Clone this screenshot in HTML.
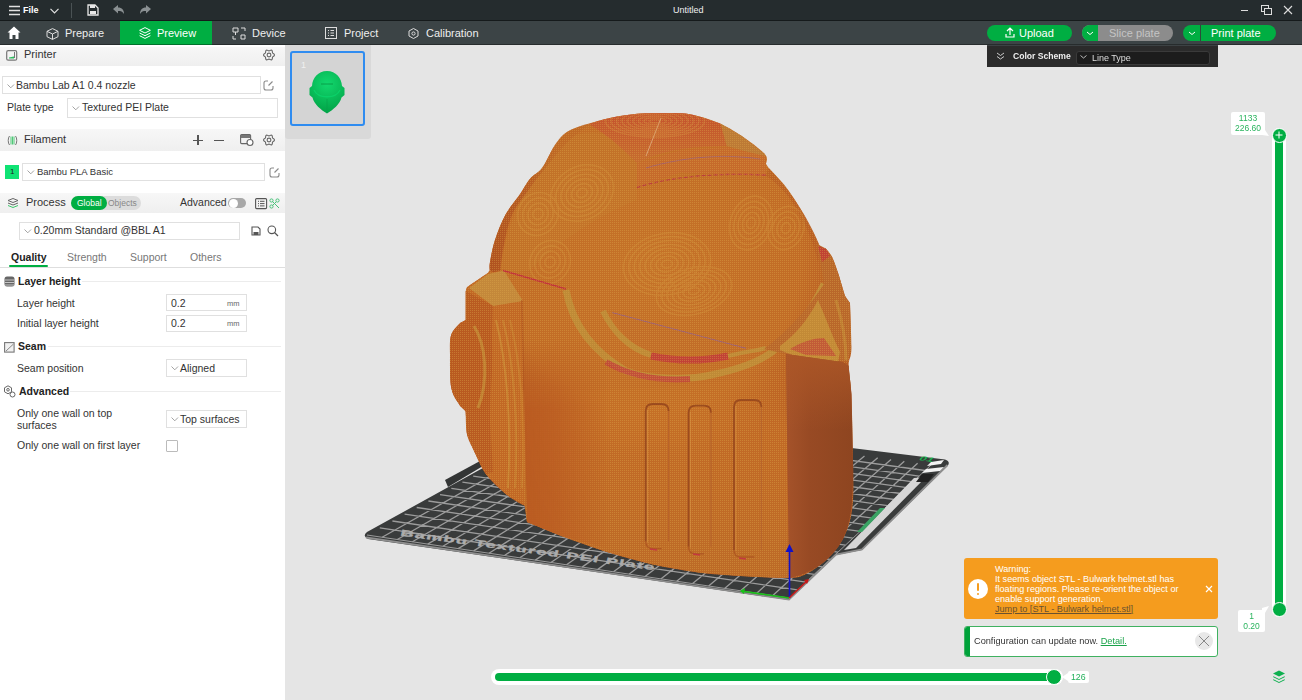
<!DOCTYPE html>
<html><head><meta charset="utf-8">
<style>
*{box-sizing:border-box;margin:0;padding:0}
html,body{width:1302px;height:700px;overflow:hidden;background:#e5e5e5;font-family:"Liberation Sans",sans-serif}
.a{position:absolute}
.t{position:absolute;white-space:nowrap;line-height:1}
#title{left:0;top:0;width:1302px;height:21px;background:#252c2e;border-bottom:1px solid #151a1b}
#tabs{left:0;top:21px;width:1302px;height:24px;background:#3c4446}
#left{left:0;top:45px;width:285px;height:655px;background:#fff}
.hdr{position:absolute;left:0;width:285px;background:linear-gradient(#f7f7f7,#efefef)}
.box{position:absolute;border:1px solid #e0e0e0;background:#fff}
.lbl{color:#333;font-size:10.5px}
.chev{position:absolute;width:6px;height:6px;border-right:1px solid #999;border-bottom:1px solid #999;transform:rotate(45deg)}
.sep{position:absolute;height:1px;background:#ececec}
svg{position:absolute;overflow:visible}
</style></head>
<body>
<!-- title bar -->
<div id="title" class="a">
  <svg style="left:9px;top:5px" width="12" height="11"><path d="M0 1.5H11M0 5.5H11M0 9.5H11" stroke="#e0e0e0" stroke-width="1.4"/></svg>
  <div class="t" style="left:23px;top:6px;font-size:9px;color:#fff;font-weight:bold">File</div>
  <svg style="left:50px;top:8px" width="9" height="6"><path d="M0.5 0.8L4.5 4.8L8.5 0.8" stroke="#e0e0e0" stroke-width="1.2" fill="none"/></svg>
  <div class="a" style="left:71px;top:3px;width:1px;height:15px;background:#4a5254"></div>
  <svg style="left:87px;top:4px" width="12" height="12"><path d="M1 1H8L11 4V11H1Z" stroke="#e8e8e8" stroke-width="1.3" fill="none"/><rect x="3" y="1" width="5" height="3" fill="#e8e8e8"/><rect x="3" y="7" width="6" height="3" fill="#e8e8e8"/></svg>
  <svg style="left:113px;top:5px" width="12" height="10"><path d="M0 4L5 0V2.5C9 2.5 11 5 11 9C9.5 6.5 8 6 5 6V8.5Z" fill="#8a9092"/></svg>
  <svg style="left:140px;top:5px" width="12" height="10"><path d="M11 4L6 0V2.5C2 2.5 0 5 0 9C1.5 6.5 3 6 6 6V8.5Z" fill="#8a9092"/></svg>
  <div class="t" style="left:673px;top:6px;font-size:9px;color:#f0f0f0">Untitled</div>
  <div class="a" style="left:1241px;top:10px;width:7px;height:1px;background:#ddd"></div>
  <svg style="left:1261px;top:5px" width="12" height="11"><rect x="0.5" y="0.5" width="7" height="6" stroke="#ddd" fill="none"/><rect x="3.5" y="3.5" width="7" height="6" stroke="#ddd" fill="#252c2e"/></svg>
  <svg style="left:1283px;top:5px" width="10" height="10"><path d="M1 1L9 9M9 1L1 9" stroke="#ddd" stroke-width="1.1"/></svg>
</div>
<!-- tabs bar -->
<div id="tabs" class="a">
  <svg style="left:7px;top:5px" width="14" height="14"><path d="M7 0.5L0.5 6.5H2.5V13H5.5V9H8.5V13H11.5V6.5H13.5Z" fill="#fff"/></svg>
  <svg style="left:46px;top:7px" width="13" height="12"><path d="M6.5 0.6L12 3.3V8.7L6.5 11.4L1 8.7V3.3Z M1 3.3L6.5 6L12 3.3 M6.5 6V11.4" stroke="#ddd" stroke-width="1" fill="none"/></svg>
  <div class="t" style="left:65px;top:7px;font-size:11px;color:#eee">Prepare</div>
  <div class="a" style="left:120px;top:0;width:92px;height:24px;background:#00ae42"></div>
  <svg style="left:139px;top:6px" width="12" height="13"><path d="M6 0.6L11.4 3.3L6 6L0.6 3.3Z M0.6 6L6 8.7L11.4 6 M0.6 8.7L6 11.4L11.4 8.7" stroke="#fff" stroke-width="1" fill="none"/></svg>
  <div class="t" style="left:157px;top:7px;font-size:11px;color:#fff">Preview</div>
  <svg style="left:232px;top:6px" width="14" height="13"><path d="M1 1H6V5H1Z M3.5 5V8 M1 9V12H4 M13 1V4 M9 1H13 M9 8H13V12H9Z" stroke="#ddd" stroke-width="1" fill="none"/></svg>
  <div class="t" style="left:252px;top:7px;font-size:11px;color:#eee">Device</div>
  <svg style="left:325px;top:6px" width="13" height="13"><rect x="0.5" y="0.5" width="11" height="11" stroke="#ddd" fill="none"/><path d="M3 3.5H4M5.5 3.5H9M3 6H4M5.5 6H9M3 8.5H4M5.5 8.5H9" stroke="#ddd"/></svg>
  <div class="t" style="left:344px;top:7px;font-size:11px;color:#eee">Project</div>
  <svg style="left:408px;top:7px" width="11" height="11"><path d="M5.5 0.5L10 3V8L5.5 10.5L1 8V3Z" stroke="#ddd" stroke-width="1" fill="none"/><circle cx="5.5" cy="5.5" r="1.6" stroke="#ddd" fill="none"/></svg>
  <div class="t" style="left:426px;top:7px;font-size:11px;color:#eee">Calibration</div>
  <!-- upload -->
  <div class="a" style="left:987px;top:4px;width:85px;height:16px;border-radius:8px;background:#00ae42"></div>
  <svg style="left:1005px;top:6px" width="10" height="11"><path d="M5 8V1M2 4L5 1L8 4M1 7V10H9V7" stroke="#fff" stroke-width="1.2" fill="none"/></svg>
  <div class="t" style="left:1019px;top:7px;font-size:11px;color:#fff">Upload</div>
  <div class="a" style="left:1082px;top:4px;width:91px;height:16px;border-radius:8px;background:#8c8c8c;overflow:hidden"><div class="a" style="left:0;top:0;width:16px;height:16px;background:#00ae42"></div></div>
  <svg style="left:1086px;top:10px" width="8" height="5"><path d="M1 1L4 3.5L7 1" stroke="#fff" stroke-width="1" fill="none"/></svg>
  <div class="t" style="left:1109px;top:7px;font-size:11px;color:#c4c4c4">Slice plate</div>
  <div class="a" style="left:1183px;top:4px;width:93px;height:16px;border-radius:8px;background:#00ae42;overflow:hidden"><div class="a" style="left:17px;top:0;width:1px;height:16px;background:#2d4b3a"></div></div>
  <svg style="left:1188px;top:10px" width="8" height="5"><path d="M1 1L4 3.5L7 1" stroke="#fff" stroke-width="1" fill="none"/></svg>
  <div class="t" style="left:1211px;top:7px;font-size:11px;color:#fff">Print plate</div>
</div>

<div class="a" style="left:0;top:44px;width:1302px;height:1px;background:rgba(0,0,0,0.35)"></div>
<!-- left panel -->
<div id="left" class="a">
  <div class="hdr" style="top:2px;height:19px"></div>
  <svg style="left:6px;top:5px" width="12" height="11"><rect x="0.7" y="0.7" width="10" height="9.5" rx="1.5" stroke="#777" stroke-width="1.2" fill="none"/><path d="M3 8.5H8V6.5L3 7.5Z" fill="#2ebd5f"/><path d="M8.5 2V8" stroke="#777"/></svg>
  <div class="t lbl" style="left:24px;top:4px;font-size:11px">Printer</div>
  <svg style="left:263px;top:4px" width="12" height="12"><path d="M7.33 1.38Q8.10 0.92 8.73 1.28Q9.35 1.64 9.34 2.54Q9.33 3.44 9.61 3.92Q9.88 4.39 10.67 4.84Q11.45 5.28 11.45 6.00Q11.45 6.72 10.67 7.16Q9.88 7.61 9.61 8.08Q9.33 8.56 9.34 9.46Q9.35 10.36 8.73 10.72Q8.10 11.08 7.33 10.62Q6.55 10.16 6.00 10.16Q5.45 10.16 4.67 10.62Q3.90 11.08 3.27 10.72Q2.65 10.36 2.66 9.46Q2.67 8.56 2.39 8.08Q2.12 7.61 1.33 7.16Q0.55 6.72 0.55 6.00Q0.55 5.28 1.33 4.84Q2.12 4.39 2.39 3.92Q2.67 3.44 2.66 2.54Q2.65 1.64 3.27 1.28Q3.90 0.92 4.67 1.38Q5.45 1.84 6.00 1.84Q6.55 1.84 7.33 1.38Z" stroke="#666" stroke-width="1.1" fill="none"/><circle cx="6" cy="6" r="1.9" stroke="#666" stroke-width="1.1" fill="none"/></svg>

  <div class="box" style="left:2px;top:31px;width:259px;height:18px"></div>
  <svg style="left:7.0px;top:39.0px" width="8" height="5"><path d="M0.5 0.5L3.8 3.8L7 0.5" stroke="#9a9a9a" stroke-width="0.9" fill="none"/></svg>
  <div class="t lbl" style="left:16px;top:34.5px">Bambu Lab A1 0.4 nozzle</div>
  <svg style="left:263px;top:35px" width="11" height="11"><path d="M5 1H3Q1 1 1 3V8Q1 10 3 10H8Q10 10 10 8V6" stroke="#8a8a8a" stroke-width="1.1" fill="none"/><path d="M5.5 5.5L9.5 1.5" stroke="#8a8a8a" stroke-width="1.1"/></svg>

  <div class="t lbl" style="left:7px;top:57px">Plate type</div>
  <div class="box" style="left:67px;top:53px;width:211px;height:20px"></div>
  <svg style="left:72px;top:61px" width="8" height="5"><path d="M0.5 0.5L3.8 3.8L7 0.5" stroke="#9a9a9a" stroke-width="0.9" fill="none"/></svg>
  <div class="t lbl" style="left:82px;top:57px">Textured PEI Plate</div>

  <div class="hdr" style="top:84px;height:22px"></div>
  <svg style="left:7px;top:90px" width="11" height="11"><path d="M2.5 1C0.8 3 0.8 8 2.5 10M8.5 1C10.2 3 10.2 8 8.5 10" stroke="#777" stroke-width="1" fill="none"/><path d="M4 1.5V9.5M5.5 1.5V9.5M7 1.5V9.5" stroke="#3cc46a" stroke-width="0.9"/></svg>
  <div class="t lbl" style="left:24px;top:89px;font-size:11px">Filament</div>
  <div class="a" style="left:193px;top:94.5px;width:10px;height:1.2px;background:#555"></div>
  <div class="a" style="left:197.4px;top:90px;width:1.2px;height:10px;background:#555"></div>
  <div class="a" style="left:214px;top:94.5px;width:10px;height:1.2px;background:#555"></div>
  <svg style="left:240px;top:89px" width="14" height="12"><rect x="0.6" y="0.6" width="10" height="9" rx="1" stroke="#666" stroke-width="1.1" fill="none"/><rect x="1" y="1" width="9" height="3" fill="#777"/><circle cx="10" cy="8.5" r="3" fill="#fff" stroke="#666" stroke-width="1.1"/></svg>
  <svg style="left:263px;top:89px" width="12" height="12"><path d="M7.33 1.38Q8.10 0.92 8.73 1.28Q9.35 1.64 9.34 2.54Q9.33 3.44 9.61 3.92Q9.88 4.39 10.67 4.84Q11.45 5.28 11.45 6.00Q11.45 6.72 10.67 7.16Q9.88 7.61 9.61 8.08Q9.33 8.56 9.34 9.46Q9.35 10.36 8.73 10.72Q8.10 11.08 7.33 10.62Q6.55 10.16 6.00 10.16Q5.45 10.16 4.67 10.62Q3.90 11.08 3.27 10.72Q2.65 10.36 2.66 9.46Q2.67 8.56 2.39 8.08Q2.12 7.61 1.33 7.16Q0.55 6.72 0.55 6.00Q0.55 5.28 1.33 4.84Q2.12 4.39 2.39 3.92Q2.67 3.44 2.66 2.54Q2.65 1.64 3.27 1.28Q3.90 0.92 4.67 1.38Q5.45 1.84 6.00 1.84Q6.55 1.84 7.33 1.38Z" stroke="#666" stroke-width="1.1" fill="none"/><circle cx="6" cy="6" r="1.9" stroke="#666" stroke-width="1.1" fill="none"/></svg>

  <div class="a" style="left:5px;top:120px;width:14px;height:14px;background:#0fe374"></div>
  <div class="t" style="left:10px;top:122.7px;font-size:8px;color:#222">1</div>
  <div class="box" style="left:22px;top:118px;width:243px;height:18px"></div>
  <svg style="left:27.0px;top:125.0px" width="8" height="5"><path d="M0.5 0.5L3.8 3.8L7 0.5" stroke="#9a9a9a" stroke-width="0.9" fill="none"/></svg>
  <div class="t lbl" style="left:37px;top:121.5px;font-size:9.5px">Bambu PLA Basic</div>
  <svg style="left:269px;top:122px" width="11" height="11"><path d="M5 1H3Q1 1 1 3V8Q1 10 3 10H8Q10 10 10 8V6" stroke="#8a8a8a" stroke-width="1.1" fill="none"/><path d="M5.5 5.5L9.5 1.5" stroke="#8a8a8a" stroke-width="1.1"/></svg>

  <div class="hdr" style="top:148px;height:20px"></div>
  <svg style="left:7px;top:152px" width="12" height="12"><path d="M1 3.5L6 1.5L11 3.5L6 5.5Z" stroke="#666" fill="none"/><path d="M1 6L6 8L11 6" stroke="#666" fill="none"/><path d="M1 8.5L6 10.5L11 8.5" stroke="#3cc46a" fill="none"/></svg>
  <div class="t lbl" style="left:26px;top:152px;font-size:11px">Process</div>
  <div class="a" style="left:71px;top:151px;width:70px;height:14px;border-radius:7px;background:#dcdcdc"></div>
  <div class="a" style="left:71px;top:151px;width:36px;height:14px;border-radius:7px;background:#00ae42"></div>
  <div class="t" style="left:77px;top:154px;font-size:8.5px;color:#fff">Global</div>
  <div class="t" style="left:108px;top:154px;font-size:8.5px;color:#888">Objects</div>
  <div class="t lbl" style="left:180px;top:152px;font-size:10.5px">Advanced</div>
  <div class="a" style="left:228px;top:153px;width:18px;height:10px;border-radius:5px;background:#a8a8a8"></div>
  <div class="a" style="left:228.5px;top:153.5px;width:9px;height:9px;border-radius:50%;background:#fff"></div>
  <svg style="left:255px;top:153px" width="13" height="12"><rect x="0.6" y="0.6" width="11" height="10" rx="1" stroke="#555" stroke-width="1.1" fill="none"/><path d="M3 3.3H4M5 3.3H9.5M3 5.6H4M5 5.6H9.5M3 7.9H4M5 7.9H9.5" stroke="#555"/></svg>
  <svg style="left:269px;top:153px" width="11" height="11"><circle cx="2.5" cy="2.5" r="1.6" stroke="#49c27a" fill="none"/><circle cx="2.5" cy="8.5" r="1.6" stroke="#49c27a" fill="none"/><circle cx="8.5" cy="2.5" r="1.6" stroke="#49c27a" fill="none"/><path d="M3.5 3.5L10 10M3.5 7.5L7 4" stroke="#49c27a"/></svg>

  <div class="box" style="left:19px;top:177px;width:221px;height:18px"></div>
  <svg style="left:24.0px;top:184.0px" width="8" height="5"><path d="M0.5 0.5L3.8 3.8L7 0.5" stroke="#9a9a9a" stroke-width="0.9" fill="none"/></svg>
  <div class="t lbl" style="left:34px;top:180px">0.20mm Standard @BBL A1</div>
  <svg style="left:251px;top:181px" width="10" height="10"><path d="M1 1H7L9 3V9H1Z" stroke="#555" stroke-width="1.1" fill="none"/><rect x="2.5" y="6" width="5" height="3" fill="#555"/></svg>
  <svg style="left:267px;top:180px" width="12" height="12"><circle cx="4.8" cy="4.8" r="3.8" stroke="#555" stroke-width="1.1" fill="none"/><path d="M7.5 7.5L11 11" stroke="#555" stroke-width="1.2"/></svg>

  <div class="t" style="left:11px;top:207px;font-size:10.5px;color:#222;font-weight:bold">Quality</div>
  <div class="a" style="left:9px;top:220px;width:39px;height:2px;background:#00ae42;border-radius:1px"></div>
  <div class="t" style="left:67px;top:207px;font-size:10.5px;color:#777">Strength</div>
  <div class="t" style="left:130px;top:207px;font-size:10.5px;color:#777">Support</div>
  <div class="t" style="left:190px;top:207px;font-size:10.5px;color:#777">Others</div>
  <div class="a" style="left:0;top:222px;width:285px;height:1px;background:#dedede"></div>

  <svg style="left:4px;top:231px" width="11" height="11"><rect x="0.5" y="0.5" width="10" height="10" rx="2.5" fill="#666"/><path d="M1 4H10M1 6.5H10M1 9H10" stroke="#ddd" stroke-width="0.8"/></svg>
  <div class="t" style="left:18px;top:231px;font-size:10.5px;color:#222;font-weight:bold">Layer height</div>
  <div class="sep" style="left:82px;top:236px;width:199px"></div>
  <div class="t lbl" style="left:17px;top:253px">Layer height</div>
  <div class="box" style="left:166px;top:249px;width:81px;height:17px"></div>
  <div class="t lbl" style="left:171px;top:253px">0.2</div>
  <div class="t" style="left:227px;top:255px;font-size:7.5px;color:#666">mm</div>
  <div class="t lbl" style="left:17px;top:273px">Initial layer height</div>
  <div class="box" style="left:166px;top:270px;width:81px;height:17px"></div>
  <div class="t lbl" style="left:171px;top:273px">0.2</div>
  <div class="t" style="left:227px;top:275px;font-size:7.5px;color:#666">mm</div>

  <svg style="left:4px;top:297px" width="11" height="11"><rect x="0.6" y="0.6" width="9.5" height="9.5" stroke="#777" stroke-width="1.1" fill="#f0f0f0"/><path d="M2 9L9.5 2" stroke="#888"/></svg>
  <div class="t" style="left:18px;top:296px;font-size:10.5px;color:#222;font-weight:bold">Seam</div>
  <div class="sep" style="left:48px;top:301px;width:233px"></div>
  <div class="t lbl" style="left:17px;top:318px">Seam position</div>
  <div class="box" style="left:166px;top:314px;width:81px;height:18px"></div>
  <svg style="left:171.0px;top:321.0px" width="8" height="5"><path d="M0.5 0.5L3.8 3.8L7 0.5" stroke="#9a9a9a" stroke-width="0.9" fill="none"/></svg>
  <div class="t lbl" style="left:180px;top:318px">Aligned</div>

  <svg style="left:3px;top:340px" width="13" height="13"><path d="M5 0.8L8.5 2.8V6.8L5 8.8L1.5 6.8V2.8Z" stroke="#666" stroke-width="1" fill="none"/><circle cx="5" cy="4.8" r="1.3" stroke="#666" fill="none"/><circle cx="9.5" cy="9.5" r="2.5" stroke="#666" fill="#fff"/></svg>
  <div class="t" style="left:19px;top:341px;font-size:10.5px;color:#222;font-weight:bold">Advanced</div>
  <div class="sep" style="left:70px;top:346px;width:211px"></div>
  <div class="t lbl" style="left:17px;top:363px">Only one wall on top</div>
  <div class="t lbl" style="left:17px;top:375px">surfaces</div>
  <div class="box" style="left:166px;top:365px;width:81px;height:18px"></div>
  <svg style="left:171.0px;top:372.0px" width="8" height="5"><path d="M0.5 0.5L3.8 3.8L7 0.5" stroke="#9a9a9a" stroke-width="0.9" fill="none"/></svg>
  <div class="t lbl" style="left:180px;top:369px">Top surfaces</div>
  <div class="t lbl" style="left:17px;top:395px">Only one wall on first layer</div>
  <div class="a" style="left:166px;top:395px;width:12px;height:12px;border:1px solid #bbb;border-radius:1px;background:#fff"></div>
</div>

<!-- viewport -->
<svg class="a" style="left:0;top:0" width="1302" height="700" viewBox="0 0 1302 700">
<path d="M445 480 L480 461 L483 466 L448 487 Z" fill="#333535"/>
<path d="M367 532 L580 414.5 L945 459.5 Q951 461.5 947.5 466 L862 550 L836 555 L789 600 L368 539 Q362 536 367 532 Z" fill="#393b3b"/>
<path d="M382.1 537.3L592.6 418.7M397.3 539.5L605.3 420.5M412.4 541.8L618.0 422.2M427.7 544.1L630.7 423.9M442.9 546.3L643.5 425.7M458.2 548.6L656.3 427.4M473.6 550.9L669.1 429.2M489.0 553.2L681.9 430.9M504.4 555.5L694.8 432.7M519.8 557.8L707.6 434.5M535.3 560.1L720.6 436.2M550.9 562.5L733.5 438.0M566.5 564.8L746.5 439.8M582.1 567.1L759.5 441.5M597.8 569.4L772.5 443.3M613.5 571.8L785.5 445.1M629.2 574.1L798.6 446.9M645.0 576.5L811.7 448.7M660.8 578.9L824.9 450.5M676.7 581.2L838.0 452.3M692.6 583.6L851.2 454.1M708.6 586.0L864.5 455.9M724.6 588.4L877.7 457.7M740.6 590.8L891.0 459.5M756.7 593.2L904.3 461.3M772.8 595.6L917.6 463.2M379.8 527.9L797.6 589.9M392.4 521.0L806.0 582.1M404.6 514.1L814.2 574.4M416.7 507.5L822.3 566.8M428.4 501.0L830.2 559.5M440.0 494.6L837.9 552.2M451.3 488.3L845.4 545.2M462.4 482.2L852.8 538.2M473.2 476.1L860.1 531.4M483.9 470.2L867.2 524.8M494.3 464.5L874.1 518.3M504.6 458.8L880.9 511.9M514.6 453.2L887.6 505.6M524.5 447.7L894.2 499.5M534.2 442.4L900.6 493.5M543.7 437.1L906.9 487.6M553.0 432.0L913.1 481.8M562.2 426.9L919.2 476.1M571.2 421.9L925.1 470.5" stroke="#9c9c9c" stroke-width="1.3" fill="none"/>
<path d="M367.0 535.0 L789.0 598.0 L931.0 465.0" stroke="#9a9a9a" stroke-width="1" fill="none"/>
<path d="M366 537.5 L789 599.5 L836 554.5 L862 549.5 L947.5 465" stroke="#8e8e8e" stroke-width="1.8" fill="none"/>
<path d="M844 550 L856 548 L926 477 L914 478 Z" fill="#d6d6d6"/>
<path d="M857 532 L862 532 L885 508 L880 508 Z" fill="#3aa364"/>
<path d="M916 482 L928 482 L934 474 L922 474 Z" fill="#222"/>
<path d="M922 473 L940 471 L944 467 L926 469 Z" fill="#f2f2f2"/>
<path d="M927 466 L941 464 L944 460 L931 462 Z" fill="#f2f2f2"/>
<text x="0" y="0" transform="matrix(0.69,0.094,-0.08,0.33,400,535.5)" font-family="Liberation Sans" font-weight="bold" font-size="26" fill="#acacac" stroke="#acacac" stroke-width="0.9" letter-spacing="2">Bambu Textured PEI Plate</text>
<text x="0" y="0" transform="matrix(0.9,0.12,-0.4,0.4,918,460)" font-family="Liberation Sans" font-weight="bold" font-size="14" fill="#19b04f">01</text>
<defs>
<radialGradient id="dome" cx="650" cy="260" r="200" gradientUnits="userSpaceOnUse">
<stop offset="0" stop-color="#c57228"/><stop offset="0.75" stop-color="#c26c26"/><stop offset="1" stop-color="#b65a22"/></radialGradient>
<linearGradient id="sideg" x1="786" y1="0" x2="853" y2="0" gradientUnits="userSpaceOnUse">
<stop offset="0" stop-color="#a5532a"/><stop offset="0.35" stop-color="#984a24"/><stop offset="1" stop-color="#8e4520"/></linearGradient>
<linearGradient id="faceg" x1="0" y1="360" x2="0" y2="575" gradientUnits="userSpaceOnUse">
<stop offset="0" stop-color="#c97428" stop-opacity="0"/><stop offset="0.3" stop-color="#c97428" stop-opacity="0.6"/><stop offset="1" stop-color="#bc6a27"/></linearGradient>
<linearGradient id="capg" x1="0" y1="113" x2="0" y2="158" gradientUnits="userSpaceOnUse">
<stop offset="0" stop-color="#c5522d"/><stop offset="1" stop-color="#c66a2e"/></linearGradient>
<linearGradient id="sidetop" x1="0" y1="354" x2="0" y2="430" gradientUnits="userSpaceOnUse"><stop offset="0" stop-color="#ad5727" stop-opacity="0.9"/><stop offset="1" stop-color="#ad5727" stop-opacity="0"/></linearGradient>
<linearGradient id="rimg" x1="490" y1="0" x2="560" y2="0" gradientUnits="userSpaceOnUse"><stop offset="0" stop-color="#b05220"/><stop offset="0.5" stop-color="#b65a22"/><stop offset="1" stop-color="#bc6424" stop-opacity="0.5"/></linearGradient>
<linearGradient id="facel" x1="522" y1="0" x2="610" y2="0" gradientUnits="userSpaceOnUse"><stop offset="0" stop-color="#b95a21" stop-opacity="0.95"/><stop offset="0.35" stop-color="#bb5c22" stop-opacity="0.8"/><stop offset="1" stop-color="#bb5c22" stop-opacity="0"/></linearGradient>
<linearGradient id="vmaskg" x1="0" y1="340" x2="0" y2="410" gradientUnits="userSpaceOnUse"><stop offset="0" stop-color="#fff" stop-opacity="0"/><stop offset="1" stop-color="#fff" stop-opacity="1"/></linearGradient>
<mask id="vmask" maskUnits="userSpaceOnUse" x="0" y="0" width="1302" height="700"><rect x="0" y="0" width="1302" height="700" fill="url(#vmaskg)"/></mask>
<pattern id="dots" width="2" height="2" patternUnits="userSpaceOnUse"><rect x="0" y="0" width="1" height="1" fill="#dcaa4c"/></pattern>
<clipPath id="silclip"><path d="M665.0 113.0 C656.8 112.9 649.8 112.8 640.6 113.6 C631.4 114.4 619.1 116.1 609.9 117.9 C600.7 119.8 592.5 122.4 585.3 124.7 C578.1 127.0 572.0 128.5 566.9 132.0 C561.8 135.5 558.7 139.6 554.6 145.5 C550.5 151.4 546.4 162.2 542.3 167.7 C538.2 173.2 533.6 174.5 530.0 178.7 C526.4 182.9 524.8 187.0 520.8 192.9 C516.8 198.8 510.0 206.5 505.7 214.3 C501.4 222.2 497.6 232.1 495.0 240.0 C492.4 247.9 490.9 257.0 490.0 262.0 C489.1 267.0 489.8 268.7 489.7 270.0 C489.3 270.6 487.9 272.8 487.5 273.3 C484.1 275.6 470.4 284.9 467.0 287.2 C466.8 287.9 465.9 290.7 465.7 291.4 C465.7 296.2 465.7 315.2 465.7 320.0 C464.8 320.5 460.9 322.4 460.0 322.9 C458.6 324.8 453.1 329.1 451.4 334.3 C449.7 339.5 450.0 345.2 450.0 354.3 C450.0 363.4 449.7 380.0 451.4 388.6 C453.1 397.2 458.6 402.9 460.0 405.7 C460.9 406.6 464.8 410.4 465.7 411.4 C465.9 415.2 465.6 427.6 467.0 434.3 C468.4 441.0 471.1 444.7 474.3 451.4 C477.5 458.1 480.6 467.1 486.0 474.3 C491.4 481.5 500.1 489.5 506.6 494.8 C513.1 500.1 521.8 504.1 524.8 506.0 C525.2 508.7 526.6 519.3 527.0 522.0 C532.7 524.3 548.1 531.0 561.4 536.0 C574.7 541.0 591.8 547.2 607.0 552.0 C622.2 556.8 637.5 561.1 652.8 564.5 C668.0 567.9 684.0 570.6 698.5 572.5 C713.0 574.4 724.9 575.1 740.0 576.0 C755.1 576.9 778.0 578.3 789.0 578.0 C800.0 577.7 800.2 576.7 806.0 574.0 C811.8 571.3 818.3 567.0 824.0 562.0 C829.7 557.0 835.8 550.3 840.0 544.0 C844.2 537.7 846.8 531.3 849.0 524.0 C851.2 516.7 852.3 510.7 853.0 500.0 C853.7 489.3 853.3 477.6 853.0 460.0 C852.7 442.4 852.1 410.0 851.4 394.3 C850.7 378.6 848.6 373.3 848.6 365.7 C848.6 358.1 851.2 359.1 851.4 348.6 C851.6 338.1 850.2 310.5 850.0 302.9 C849.2 301.7 846.9 300.6 845.0 295.8 C843.1 291.1 840.7 280.8 838.6 274.4 C836.5 268.0 834.3 261.5 832.2 257.2 C830.1 252.9 826.9 250.0 825.8 248.6 C824.9 248.4 821.3 247.8 820.4 247.6 C819.1 244.9 816.3 238.1 812.9 231.5 C809.5 224.9 804.8 215.7 800.0 207.9 C795.2 200.2 789.6 191.7 784.4 185.0 C779.1 178.3 771.1 170.6 768.5 167.7 C768.1 167.1 766.4 164.6 766.0 164.0 C765.8 162.3 768.9 158.8 764.8 154.1 C760.7 149.4 749.4 141.0 741.4 135.7 C733.4 130.4 725.5 125.8 716.9 122.2 C708.3 118.6 698.6 115.7 690.0 114.2 C681.4 112.7 673.2 113.1 665.0 113.0 Z"/></clipPath>
</defs>
<path d="M665.0 113.0 C656.8 112.9 649.8 112.8 640.6 113.6 C631.4 114.4 619.1 116.1 609.9 117.9 C600.7 119.8 592.5 122.4 585.3 124.7 C578.1 127.0 572.0 128.5 566.9 132.0 C561.8 135.5 558.7 139.6 554.6 145.5 C550.5 151.4 546.4 162.2 542.3 167.7 C538.2 173.2 533.6 174.5 530.0 178.7 C526.4 182.9 524.8 187.0 520.8 192.9 C516.8 198.8 510.0 206.5 505.7 214.3 C501.4 222.2 497.6 232.1 495.0 240.0 C492.4 247.9 490.9 257.0 490.0 262.0 C489.1 267.0 489.8 268.7 489.7 270.0 C489.3 270.6 487.9 272.8 487.5 273.3 C484.1 275.6 470.4 284.9 467.0 287.2 C466.8 287.9 465.9 290.7 465.7 291.4 C465.7 296.2 465.7 315.2 465.7 320.0 C464.8 320.5 460.9 322.4 460.0 322.9 C458.6 324.8 453.1 329.1 451.4 334.3 C449.7 339.5 450.0 345.2 450.0 354.3 C450.0 363.4 449.7 380.0 451.4 388.6 C453.1 397.2 458.6 402.9 460.0 405.7 C460.9 406.6 464.8 410.4 465.7 411.4 C465.9 415.2 465.6 427.6 467.0 434.3 C468.4 441.0 471.1 444.7 474.3 451.4 C477.5 458.1 480.6 467.1 486.0 474.3 C491.4 481.5 500.1 489.5 506.6 494.8 C513.1 500.1 521.8 504.1 524.8 506.0 C525.2 508.7 526.6 519.3 527.0 522.0 C532.7 524.3 548.1 531.0 561.4 536.0 C574.7 541.0 591.8 547.2 607.0 552.0 C622.2 556.8 637.5 561.1 652.8 564.5 C668.0 567.9 684.0 570.6 698.5 572.5 C713.0 574.4 724.9 575.1 740.0 576.0 C755.1 576.9 778.0 578.3 789.0 578.0 C800.0 577.7 800.2 576.7 806.0 574.0 C811.8 571.3 818.3 567.0 824.0 562.0 C829.7 557.0 835.8 550.3 840.0 544.0 C844.2 537.7 846.8 531.3 849.0 524.0 C851.2 516.7 852.3 510.7 853.0 500.0 C853.7 489.3 853.3 477.6 853.0 460.0 C852.7 442.4 852.1 410.0 851.4 394.3 C850.7 378.6 848.6 373.3 848.6 365.7 C848.6 358.1 851.2 359.1 851.4 348.6 C851.6 338.1 850.2 310.5 850.0 302.9 C849.2 301.7 846.9 300.6 845.0 295.8 C843.1 291.1 840.7 280.8 838.6 274.4 C836.5 268.0 834.3 261.5 832.2 257.2 C830.1 252.9 826.9 250.0 825.8 248.6 C824.9 248.4 821.3 247.8 820.4 247.6 C819.1 244.9 816.3 238.1 812.9 231.5 C809.5 224.9 804.8 215.7 800.0 207.9 C795.2 200.2 789.6 191.7 784.4 185.0 C779.1 178.3 771.1 170.6 768.5 167.7 C768.1 167.1 766.4 164.6 766.0 164.0 C765.8 162.3 768.9 158.8 764.8 154.1 C760.7 149.4 749.4 141.0 741.4 135.7 C733.4 130.4 725.5 125.8 716.9 122.2 C708.3 118.6 698.6 115.7 690.0 114.2 C681.4 112.7 673.2 113.1 665.0 113.0 Z" fill="url(#dome)"/>
<path d="M575 135 C600 128 615 135 637 157 L637 200 C600 215 560 240 530 270 L500 276 C505 220 530 170 575 135 Z" fill="#c47f30" opacity="0.3"/>
<path d="M589.0 124.0 C588.5 122.7 572.6 128.4 566.9 132.0 C561.2 135.6 558.7 139.6 554.6 145.5 C550.5 151.4 546.4 162.2 542.3 167.7 C538.2 173.2 533.6 174.5 530.0 178.7 C526.4 182.9 524.8 187.0 520.8 192.9 C516.8 198.8 510.0 206.5 505.7 214.3 C501.4 222.2 497.6 232.1 495.0 240.0 C492.4 247.9 490.9 257.0 490.0 262.0 C489.1 267.0 489.8 268.7 489.7 270.0 C491.4 271.0 498.3 275.0 500.0 276.0 C500.5 271.7 501.0 260.2 503.0 250.0 C505.0 239.8 507.5 225.3 512.0 215.0 C516.5 204.7 523.3 197.2 530.0 188.0 C536.7 178.8 545.3 168.0 552.0 160.0 C558.7 152.0 563.8 146.0 570.0 140.0 C576.2 134.0 589.5 125.3 589.0 124.0 Z" fill="url(#rimg)"/>
<path d="M768.5 167.7 C790 190 810 220 820.4 247.6 L818 262 C812 236 800 212 788 196 C778 184 770 178 766 176 Z" fill="#b85c24" opacity="0.7"/>
<path d="M589.0 124.0 C592.5 123.0 601.3 119.6 609.9 117.9 C618.5 116.2 631.4 114.4 640.6 113.6 C649.8 112.8 656.8 112.9 665.0 113.0 C673.2 113.1 680.8 112.5 690.0 114.2 C699.2 116.0 715.4 122.0 720.5 123.5 C721.5 127.2 725.7 142.2 726.7 146.0 C720.6 146.3 701.1 146.7 690.0 148.0 C678.9 149.3 668.8 151.5 660.0 154.0 C651.2 156.5 640.8 161.5 637.0 163.0 C632.8 159.2 620.0 146.5 612.0 140.0 C604.0 133.5 592.8 126.7 589.0 124.0 Z" fill="url(#capg)"/>
<path d="M720.5 123.5 L741.4 135.7 L764.8 154.1 L765 157 L726.7 146 Z" fill="#bd7a35"/>
<path d="M637 163 L680 150 L726.7 147 L765 156 L766 176 L680 172.6 L637 187.6 Z" fill="#c66a2b"/>
<path d="M637 187.6 C660 180 700 172 766 175" stroke="#bb3e3c" stroke-width="1.3" fill="none" stroke-dasharray="4 2"/>
<path d="M646 168 C680 158 720 153 760 159" stroke="#8a5a96" stroke-width="0.8" fill="none" opacity="0.7"/>
<path d="M661 118 L646 156" stroke="#ecd2b0" stroke-width="0.8" opacity="0.7"/>
<g clip-path="url(#silclip)" fill="none" stroke="#d9a247" stroke-width="1.6" opacity="0.25"><ellipse cx="582" cy="193" rx="5.5" ry="4.4" transform="rotate(-30 582 193)"/><ellipse cx="582" cy="193" rx="11.0" ry="8.8" transform="rotate(-30 582 193)"/><ellipse cx="582" cy="193" rx="16.5" ry="13.2" transform="rotate(-30 582 193)"/><ellipse cx="582" cy="193" rx="22.0" ry="17.6" transform="rotate(-30 582 193)"/><ellipse cx="582" cy="193" rx="27.5" ry="22.0" transform="rotate(-30 582 193)"/><ellipse cx="582" cy="193" rx="33.0" ry="26.4" transform="rotate(-30 582 193)"/><ellipse cx="538" cy="214" rx="5.5" ry="5.0" transform="rotate(-60 538 214)"/><ellipse cx="538" cy="214" rx="11.0" ry="9.9" transform="rotate(-60 538 214)"/><ellipse cx="538" cy="214" rx="16.5" ry="14.8" transform="rotate(-60 538 214)"/><ellipse cx="538" cy="214" rx="22.0" ry="19.8" transform="rotate(-60 538 214)"/><ellipse cx="751" cy="223" rx="5.5" ry="4.1" transform="rotate(-70 751 223)"/><ellipse cx="751" cy="223" rx="11.0" ry="8.2" transform="rotate(-70 751 223)"/><ellipse cx="751" cy="223" rx="16.5" ry="12.4" transform="rotate(-70 751 223)"/><ellipse cx="751" cy="223" rx="22.0" ry="16.5" transform="rotate(-70 751 223)"/><ellipse cx="751" cy="223" rx="27.5" ry="20.6" transform="rotate(-70 751 223)"/><ellipse cx="667" cy="264" rx="5.5" ry="3.8" transform="rotate(-10 667 264)"/><ellipse cx="667" cy="264" rx="11.0" ry="7.7" transform="rotate(-10 667 264)"/><ellipse cx="667" cy="264" rx="16.5" ry="11.5" transform="rotate(-10 667 264)"/><ellipse cx="667" cy="264" rx="22.0" ry="15.4" transform="rotate(-10 667 264)"/><ellipse cx="667" cy="264" rx="27.5" ry="19.2" transform="rotate(-10 667 264)"/><ellipse cx="667" cy="264" rx="33.0" ry="23.1" transform="rotate(-10 667 264)"/><ellipse cx="667" cy="264" rx="38.5" ry="26.9" transform="rotate(-10 667 264)"/><ellipse cx="667" cy="264" rx="44.0" ry="30.8" transform="rotate(-10 667 264)"/><ellipse cx="694" cy="291" rx="5.5" ry="3.3" transform="rotate(-15 694 291)"/><ellipse cx="694" cy="291" rx="11.0" ry="6.6" transform="rotate(-15 694 291)"/><ellipse cx="694" cy="291" rx="16.5" ry="9.9" transform="rotate(-15 694 291)"/><ellipse cx="694" cy="291" rx="22.0" ry="13.2" transform="rotate(-15 694 291)"/><ellipse cx="694" cy="291" rx="27.5" ry="16.5" transform="rotate(-15 694 291)"/><ellipse cx="694" cy="291" rx="33.0" ry="19.8" transform="rotate(-15 694 291)"/><ellipse cx="694" cy="291" rx="38.5" ry="23.1" transform="rotate(-15 694 291)"/><ellipse cx="655" cy="121" rx="5.5" ry="1.8" transform="rotate(0 655 121)"/><ellipse cx="655" cy="121" rx="11.0" ry="3.6" transform="rotate(0 655 121)"/><ellipse cx="655" cy="121" rx="16.5" ry="5.4" transform="rotate(0 655 121)"/><ellipse cx="655" cy="121" rx="22.0" ry="7.3" transform="rotate(0 655 121)"/><ellipse cx="655" cy="121" rx="27.5" ry="9.1" transform="rotate(0 655 121)"/><ellipse cx="655" cy="121" rx="33.0" ry="10.9" transform="rotate(0 655 121)"/><ellipse cx="655" cy="121" rx="38.5" ry="12.7" transform="rotate(0 655 121)"/><ellipse cx="655" cy="121" rx="44.0" ry="14.5" transform="rotate(0 655 121)"/><ellipse cx="655" cy="121" rx="49.5" ry="16.3" transform="rotate(0 655 121)"/><ellipse cx="550" cy="262" rx="5.5" ry="5.0" transform="rotate(-60 550 262)"/><ellipse cx="550" cy="262" rx="11.0" ry="9.9" transform="rotate(-60 550 262)"/><ellipse cx="550" cy="262" rx="16.5" ry="14.8" transform="rotate(-60 550 262)"/><ellipse cx="550" cy="262" rx="22.0" ry="19.8" transform="rotate(-60 550 262)"/><ellipse cx="786" cy="228" rx="5.5" ry="4.4" transform="rotate(-70 786 228)"/><ellipse cx="786" cy="228" rx="11.0" ry="8.8" transform="rotate(-70 786 228)"/><ellipse cx="786" cy="228" rx="16.5" ry="13.2" transform="rotate(-70 786 228)"/><ellipse cx="786" cy="228" rx="22.0" ry="17.6" transform="rotate(-70 786 228)"/></g>
<path d="M467 287.2 L487.5 273.3 L504 270 L522 300 L526 506 L506.6 494.8 L486 474.3 L474.3 451.4 L467 434.3 L465.7 411.4 L465.7 291.4 Z" fill="#c26825"/>
<path d="M469 288 L488 274 L504 270.5 L523 301 L493 306 Z" fill="#c4883a"/>
<path d="M466 291 L493 306 L492 330 L490 420 L493 472 L486 474.3 L474.3 451.4 L467 434.3 L465.7 411.4 Z" fill="#b95b21"/>
<path d="M496 320 C506 360 512 420 508 488" stroke="#d0a040" stroke-width="2" fill="none" opacity="0.45"/>
<path d="M503 320 C513 360 519 420 515 488" stroke="#d0a040" stroke-width="2" fill="none" opacity="0.35"/>
<path d="M510 320 C520 360 526 420 522 488" stroke="#d0a040" stroke-width="2" fill="none" opacity="0.3"/>
<path d="M503 270.5 L566 289" stroke="#c2333a" stroke-width="1.6"/>
<path d="M462.0 322.0 C464.2 321.3 470.3 317.5 475.0 318.0 C479.7 318.5 487.2 316.3 490.0 325.0 C492.8 333.7 492.3 356.7 492.0 370.0 C491.7 383.3 490.3 398.0 488.0 405.0 C485.7 412.0 481.7 411.0 478.0 412.0 C474.3 413.0 468.0 411.2 466.0 411.0 C465.0 410.1 461.0 406.6 460.0 405.7 C458.6 402.9 453.1 397.2 451.4 388.6 C449.7 380.0 450.0 363.4 450.0 354.3 C450.0 345.2 449.4 339.7 451.4 334.3 C453.4 328.9 460.2 324.1 462.0 322.0 Z" fill="#b95a20"/>
<path d="M474 326 C486 345 489 380 478 408" stroke="#c9a040" stroke-width="3" fill="none" opacity="0.55"/>
<path d="M522 300 L526 506" stroke="#b0561f" stroke-width="1.5" fill="none" opacity="0.8"/>
<path d="M566 290 C572 322 590 350 626 371 C650 380 690 380 711 375 C740 369 760 361 772 352 C795 334 812 310 824 284" stroke="#bf8a36" stroke-width="7" fill="none"/>
<path d="M606 362 C630 376 660 381 690 379" stroke="#c2443a" stroke-width="6" fill="none" opacity="0.85"/>
<path d="M612 313 C625 340 640 350 651 352 L725 352 L746 348 Z" fill="#c26c2a" opacity="0.6"/>
<path d="M603 311 C612 330 628 348 651 355" stroke="#bf8a36" stroke-width="6" fill="none"/>
<path d="M651 356 C680 362 705 361 728 356" stroke="#c23c38" stroke-width="7" fill="none" opacity="0.9"/>
<path d="M728 356 C745 352 760 350 766 348" stroke="#bf8a36" stroke-width="4" fill="none"/>
<path d="M612 312.5 L746 348.3" stroke="#8a5a9a" stroke-width="0.9" opacity="0.8"/>
<path d="M817 244 L825.8 248.6 L832.2 257.2 L838.6 274.4 L845 295.8 L850 303 L851 348 L848 362 L812 360 L764 349 C790 330 810 305 824 284 Z" fill="#b9672a"/>
<path d="M780 346 C795 335 808 320 818 300 C826 318 832 336 840 352 L838 362 C815 361 795 357 780 350 Z" fill="#c38a36"/>
<path d="M790 349 C802 342 812 338 824 338 L836 356 L806 355 Z" fill="#c23c38" opacity="0.6"/>
<path d="M818 246 L826 249 L830 256 L822 262 Z" fill="#c23a36" opacity="0.8"/>
<path d="M836 300 C842 320 846 340 846 360" stroke="#c8963a" stroke-width="3" fill="none" opacity="0.5"/>
<path d="M524 500 L520 390 C600 390 700 390 786 370 L789 578 L740 576 L698.5 572.5 L652.8 564.5 L607 552 L561.4 536 L527 522 Z" fill="url(#faceg)"/>
<path d="M665.0 113.0 C656.8 112.9 649.8 112.8 640.6 113.6 C631.4 114.4 619.1 116.1 609.9 117.9 C600.7 119.8 592.5 122.4 585.3 124.7 C578.1 127.0 572.0 128.5 566.9 132.0 C561.8 135.5 558.7 139.6 554.6 145.5 C550.5 151.4 546.4 162.2 542.3 167.7 C538.2 173.2 533.6 174.5 530.0 178.7 C526.4 182.9 524.8 187.0 520.8 192.9 C516.8 198.8 510.0 206.5 505.7 214.3 C501.4 222.2 497.6 232.1 495.0 240.0 C492.4 247.9 490.9 257.0 490.0 262.0 C489.1 267.0 489.8 268.7 489.7 270.0 C489.3 270.6 487.9 272.8 487.5 273.3 C484.1 275.6 470.4 284.9 467.0 287.2 C466.8 287.9 465.9 290.7 465.7 291.4 C465.7 296.2 465.7 315.2 465.7 320.0 C464.8 320.5 460.9 322.4 460.0 322.9 C458.6 324.8 453.1 329.1 451.4 334.3 C449.7 339.5 450.0 345.2 450.0 354.3 C450.0 363.4 449.7 380.0 451.4 388.6 C453.1 397.2 458.6 402.9 460.0 405.7 C460.9 406.6 464.8 410.4 465.7 411.4 C465.9 415.2 465.6 427.6 467.0 434.3 C468.4 441.0 471.1 444.7 474.3 451.4 C477.5 458.1 480.6 467.1 486.0 474.3 C491.4 481.5 500.1 489.5 506.6 494.8 C513.1 500.1 521.8 504.1 524.8 506.0 C525.2 508.7 526.6 519.3 527.0 522.0 C532.7 524.3 548.1 531.0 561.4 536.0 C574.7 541.0 591.8 547.2 607.0 552.0 C622.2 556.8 637.5 561.1 652.8 564.5 C668.0 567.9 684.0 570.6 698.5 572.5 C713.0 574.4 724.9 575.1 740.0 576.0 C755.1 576.9 778.0 578.3 789.0 578.0 C800.0 577.7 800.2 576.7 806.0 574.0 C811.8 571.3 818.3 567.0 824.0 562.0 C829.7 557.0 835.8 550.3 840.0 544.0 C844.2 537.7 846.8 531.3 849.0 524.0 C851.2 516.7 852.3 510.7 853.0 500.0 C853.7 489.3 853.3 477.6 853.0 460.0 C852.7 442.4 852.1 410.0 851.4 394.3 C850.7 378.6 848.6 373.3 848.6 365.7 C848.6 358.1 851.2 359.1 851.4 348.6 C851.6 338.1 850.2 310.5 850.0 302.9 C849.2 301.7 846.9 300.6 845.0 295.8 C843.1 291.1 840.7 280.8 838.6 274.4 C836.5 268.0 834.3 261.5 832.2 257.2 C830.1 252.9 826.9 250.0 825.8 248.6 C824.9 248.4 821.3 247.8 820.4 247.6 C819.1 244.9 816.3 238.1 812.9 231.5 C809.5 224.9 804.8 215.7 800.0 207.9 C795.2 200.2 789.6 191.7 784.4 185.0 C779.1 178.3 771.1 170.6 768.5 167.7 C768.1 167.1 766.4 164.6 766.0 164.0 C765.8 162.3 768.9 158.8 764.8 154.1 C760.7 149.4 749.4 141.0 741.4 135.7 C733.4 130.4 725.5 125.8 716.9 122.2 C708.3 118.6 698.6 115.7 690.0 114.2 C681.4 112.7 673.2 113.1 665.0 113.0 Z" fill="url(#dots)" opacity="0.38"/>
<path d="M522 300 L610 300 L610 549 L561.4 536 L527 522 Z" fill="url(#facel)" mask="url(#vmask)"/>
<path d="M786 354 L842 362 L848.6 365.7 L851.4 394.3 L853 460 C853.5 500 852 525 840 544 C830 560 812 574 789 578 Z" fill="url(#sideg)"/>
<path d="M786 354 L842 362 L848.6 365.7 L851.4 394.3 L852 430 L788 430 Z" fill="url(#sidetop)"/>
<path d="M645.7 541.6 L645.7 411 Q645.7 404 652.7 404 L661.6 404 Q668.6 404 668.6 411" stroke="#9c4c1e" stroke-width="1.8" fill="none"/>
<path d="M645.7 541.6 Q645.7 548.6 652.7 548.6 L661.6 548.6" stroke="#b05a22" stroke-width="1.4" fill="none"/>
<path d="M668.6 411 L668.6 541.6" stroke="#b8642a" stroke-width="1.2" fill="none"/>
<path d="M647.5 410 L647.5 542.6" stroke="#dc9a48" stroke-width="1" opacity="0.55"/>
<path d="M688.6 546.7 L688.6 412.7 Q688.6 405.7 695.6 405.7 L704 405.7 Q711 405.7 711 412.7" stroke="#9c4c1e" stroke-width="1.8" fill="none"/>
<path d="M688.6 546.7 Q688.6 553.7 695.6 553.7 L704 553.7" stroke="#b05a22" stroke-width="1.4" fill="none"/>
<path d="M711 412.7 L711 546.7" stroke="#b8642a" stroke-width="1.2" fill="none"/>
<path d="M690.4 411.7 L690.4 547.7" stroke="#dc9a48" stroke-width="1" opacity="0.55"/>
<path d="M734 550 L734 407 Q734 400 741 400 L754.4 400 Q761.4 400 761.4 407" stroke="#9c4c1e" stroke-width="1.8" fill="none"/>
<path d="M734 550 Q734 557 741 557 L754.4 557" stroke="#b05a22" stroke-width="1.4" fill="none"/>
<path d="M761.4 407 L761.4 550" stroke="#b8642a" stroke-width="1.2" fill="none"/>
<path d="M735.8 406 L735.8 551" stroke="#dc9a48" stroke-width="1" opacity="0.55"/>
<path d="M650 549 L657 550 M693 554 L700 555 M739 558 L746 559" stroke="#c33a40" stroke-width="1.3"/>
<path d="M789.5 598 V550" stroke="#1010c8" stroke-width="1.6"/><path d="M785.5 552 L789.5 544 L793.5 552 Z" fill="#1010c8"/>
<path d="M789 598 L741 591" stroke="#19c019" stroke-width="1.6"/><path d="M745 588 L740 591 L744 594 Z" fill="#19c019"/>
<path d="M789 598 L807 581" stroke="#c81818" stroke-width="1.6"/><path d="M804 580 L809 579 L807 584 Z" fill="#c81818"/>
</svg>
<div class="a" style="left:285px;top:45px;width:86px;height:93.5px;background:#d9d9d9;border-radius:0 0 3px 3px"></div>
<div class="a" style="left:290px;top:51px;width:75px;height:75px;border:2px solid #2f8cf0;border-radius:3px;background:#d4d4d4"></div>
<div class="t" style="left:301px;top:61px;font-size:9px;color:#f0f0f0">1</div>


<!-- thumbnail helmet -->
<svg class="a" style="left:0;top:0" width="1302" height="700">
<defs><radialGradient id="tg" cx="327" cy="84" r="26" gradientUnits="userSpaceOnUse"><stop offset="0" stop-color="#12d86e"/><stop offset="1" stop-color="#03a84a"/></radialGradient></defs>
<path d="M327 71 C336 71 341.5 78 342 86 L344.5 88 L344.5 95 L341.5 97.5 C340 104 333 110 327 113.5 C321 110 314 104 312.5 97.5 L309.5 95 L309.5 88 L312 86 C312.5 78 318 71 327 71 Z" fill="url(#tg)"/>
<path d="M314 90 C318 99 336 99 340 90" stroke="#0bd068" stroke-width="1.3" fill="none"/>
<path d="M321 84 L333 84" stroke="#079a46" stroke-width="0.9"/>
<path d="M327 99 L327 113" stroke="#07a04a" stroke-width="0.6"/>
</svg>

<!-- right vertical slider -->
<div class="a" style="left:1272px;top:128px;width:14px;height:489px;border-radius:7px;background:#fff"></div>
<div class="a" style="left:1275px;top:136px;width:8px;height:474px;background:#00ae42"></div>
<div class="a" style="left:1271.5px;top:127.5px;width:15px;height:15px;border-radius:50%;background:#00ae42;border:1.5px solid #fff"></div>
<svg class="a" style="left:1274px;top:130px" width="10" height="10"><path d="M5 1.5V8.5M1.5 5H8.5" stroke="#fff" stroke-width="1"/></svg>
<div class="a" style="left:1271.5px;top:601.5px;width:15px;height:15px;border-radius:50%;background:#00ae42;border:1.5px solid #fff"></div>
<div class="a" style="left:1231px;top:112px;width:34px;height:23px;background:#fff;border-radius:2px"></div>
<svg class="a" style="left:1262px;top:130px" width="8" height="7"><path d="M0 0H3L7 6L0 5Z" fill="#fff"/></svg>
<div class="t" style="left:1237px;top:114px;font-size:8.5px;color:#2ab45e;width:22px;text-align:center">1133</div>
<div class="t" style="left:1234px;top:124px;font-size:8.5px;color:#2ab45e;width:28px;text-align:center">226.60</div>
<div class="a" style="left:1238px;top:610px;width:27px;height:22px;background:#fff;border-radius:2px"></div>
<svg class="a" style="left:1262px;top:606px" width="8" height="7"><path d="M0 7H3L7 0L0 2Z" fill="#fff"/></svg>
<div class="t" style="left:1238px;top:612px;font-size:8.5px;color:#2ab45e;width:27px;text-align:center">1</div>
<div class="t" style="left:1238px;top:622px;font-size:8.5px;color:#2ab45e;width:27px;text-align:center">0.20</div>
<svg class="a" style="left:1272px;top:670px" width="14" height="14"><path d="M7 0.5L13 3.5L7 6.5L1 3.5Z" fill="#0fb050"/><path d="M1.5 6.2L7 9L12.5 6.2L13 7L7 10L1 7Z" fill="#0fb050"/><path d="M1.5 9.2L7 12L12.5 9.2L13 10L7 13L1 10Z" fill="#0fb050"/></svg>

<!-- bottom slider -->
<div class="a" style="left:491px;top:669px;width:572px;height:16px;border-radius:8px;background:#fff"></div>
<div class="a" style="left:495px;top:673px;width:560px;height:8px;border-radius:4px;background:#00ae42"></div>
<div class="a" style="left:1046px;top:669px;width:16px;height:16px;border-radius:50%;background:#00ae42;border:1.5px solid #fff"></div>
<div class="a" style="left:1067.5px;top:670.5px;width:21.5px;height:12.5px;background:#fff;border-radius:2px"></div>
<svg class="a" style="left:1062px;top:673px" width="6" height="8"><path d="M6 0V8L0 4Z" fill="#fff"/></svg>
<div class="t" style="left:1067.5px;top:672.5px;font-size:8.8px;color:#22b05a;width:21.5px;text-align:center">126</div>

<!-- warning notification -->
<div class="a" style="left:964px;top:558px;width:254px;height:61px;background:#f59c1e;border-radius:3px"></div>
<div class="a" style="left:968px;top:579px;width:20px;height:20px;border-radius:50%;background:#fff"></div>
<div class="a" style="left:977px;top:583px;width:2.4px;height:8px;background:#f59c1e;border-radius:1px"></div>
<div class="a" style="left:977px;top:593px;width:2.4px;height:2.4px;background:#f59c1e;border-radius:50%"></div>
<div class="t" style="left:995px;top:563.5px;font-size:9.1px;color:#fff;line-height:10px">Warning:<br>It seems object STL - Bulwark helmet.stl has<br>floating regions. Please re-orient the object or<br>enable support generation.<br><span style="text-decoration:underline;color:#6a5230">Jump to [STL - Bulwark helmet.stl]</span></div>
<svg class="a" style="left:1205px;top:585px" width="8" height="8"><path d="M1 1L7 7M7 1L1 7" stroke="#fff" stroke-width="1.2"/></svg>

<!-- config notification -->
<div class="a" style="left:964px;top:626px;width:254px;height:31px;background:#fff;border:1px solid #3fb160;border-radius:3px;overflow:hidden"><div class="a" style="left:0;top:0;width:5px;height:31px;background:#00a23b"></div></div>
<div class="t" style="left:974px;top:637px;font-size:9.2px;color:#333">Configuration can update now. <span style="color:#1aa34a;text-decoration:underline">Detail.</span></div>
<div class="a" style="left:1195px;top:632px;width:18px;height:18px;border-radius:50%;background:#e8e8e8"></div>
<svg class="a" style="left:1198px;top:635px" width="12" height="12"><path d="M1 1L11 11M11 1L1 11" stroke="#888" stroke-width="1"/></svg>

<!-- color scheme -->
<div class="a" style="left:987px;top:45px;width:231px;height:22px;background:#2b2b2b;border-top:1px solid #3c4244"></div>
<svg style="left:996px;top:52px" width="9" height="8"><path d="M1 1L4.5 3.5L8 1M1 4.5L4.5 7L8 4.5" stroke="#ccc" stroke-width="1" fill="none"/></svg>
<div class="t" style="left:1013px;top:52px;font-size:8.6px;color:#eee;font-weight:bold">Color Scheme</div>
<div class="a" style="left:1075.5px;top:51px;width:134px;height:14px;background:#1c1c1c;border:1px solid #3a3a3a;border-radius:3px"></div>
<svg style="left:1080px;top:55px" width="7" height="5"><path d="M0.5 0.5L3.5 3L6.5 0.5" stroke="#ccc" stroke-width="0.9" fill="none"/></svg>
<div class="t" style="left:1092px;top:54px;font-size:9px;color:#ddd">Line Type</div>

</body></html>
